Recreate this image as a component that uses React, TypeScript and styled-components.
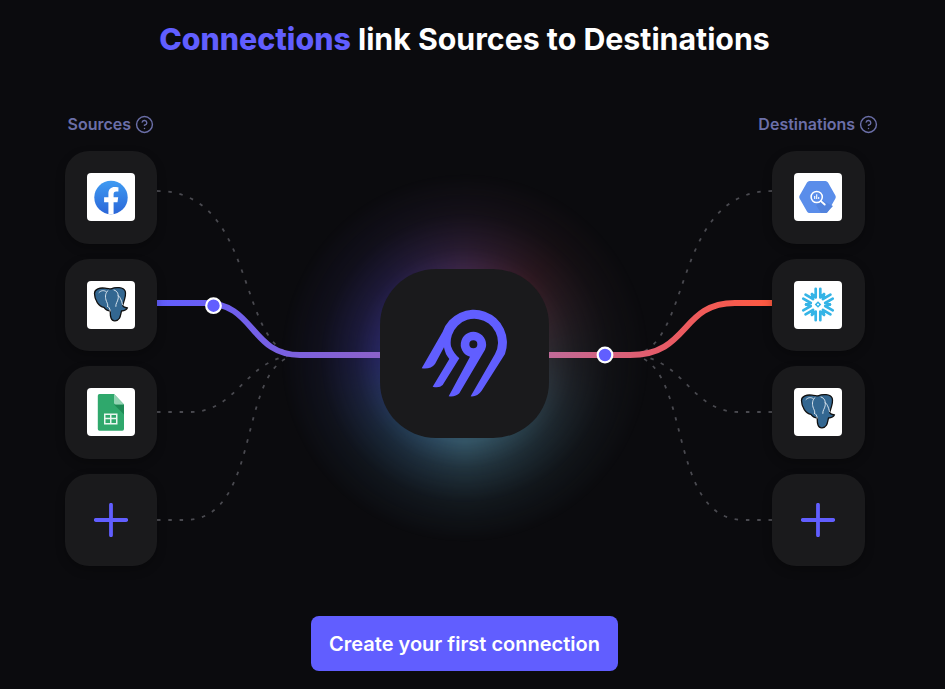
import React from "react";
import styled, { createGlobalStyle } from "styled-components";
import { CircleHelp } from "lucide-react";

const GlobalStyle = createGlobalStyle`
  html, body {
    margin: 0;
    padding: 0;
    background: #0b0b0e;
    font-family: "Inter", "Liberation Sans", sans-serif;
  }
`;

const Facebook = () => (
  <svg width="48" height="48" viewBox="0 0 48 48">
    <defs>
      <linearGradient id="fb" x1="0" y1="0" x2="0" y2="1">
        <stop offset="0" stopColor="#3f9bf2" />
        <stop offset="1" stopColor="#2a66d8" />
      </linearGradient>
    </defs>
    <circle cx="24" cy="24.5" r="16.7" fill="url(#fb)" />
    <path
      d="M21.4 41v-11.8h-4.3v-4.9h4.3v-3.7c0-4.3 2.5-6.6 6.4-6.6 1.9 0 3.6.3 3.6.3v4.1h-2.1c-2.1 0-2.7 1.3-2.7 2.6v3.3h4.6l-.7 4.9h-3.9V41z"
      fill="#fff"
    />
  </svg>
);

const Postgres = () => (
  <svg width="48" height="48" viewBox="0 0 48 48">
    <path
      d="M7.500 12.500C7.500 8 13 6.400 18 7.200c2.200.4 4.300 1 6 .6 4.400-1.800 12.500-2 14.200 2.400 1.300 3.800-1 9.200-2.400 13.600-.4 1.800 1.700 2.800 4.700 3-.9 1.900-3.800 3-6 3.200-1.100 3.800-.8 9.300-6.500 9.800-4 .3-4.800-3.600-4.800-9.900-3.100-.1-4.800-1.300-6.200-3.500C11.800 25.600 7.500 19 7.500 12.500Z"
      fill="#336791"
      stroke="#111"
      strokeWidth="1.300"
      strokeLinejoin="round"
    />
    <path
      d="M21 9.500c-2.600 2-3 6-2 9.500.6 2.300 2.300 4 1.700 6.500M27 9c3.800 1 4.800 4.700 4.100 8.900-.5 2.800-2.500 4.500-2.300 7.500M12 11.500c2.400-2.400 5-2.300 7-1M31 14.500c2 1 3.400 4.500 4.500 9M23.200 30c-.3-3-1.400-4-2.500-4.500"
      fill="none"
      stroke="#e6eef5"
      strokeWidth="0.900"
      strokeLinecap="round"
    />
  </svg>
);

const Sheets = () => (
  <svg width="48" height="48" viewBox="0 0 48 48">
    <path
      d="M12.500 6h14.500l10 10.500v24.500a1.700 1.700 0 0 1-1.700 1.700H12.500a1.700 1.700 0 0 1-1.700-1.700V7.700A1.700 1.700 0 0 1 12.500 6Z"
      fill="#2fa86c"
    />
    <path d="M27 16.500 37 26.500V16.500H27Z" fill="#1e8a55" />
    <path d="M27 6l10 10.500h-8.300A1.700 1.700 0 0 1 27 14.800Z" fill="#93d3b3" />
    <path
      d="M17 25.500h13.500v11H17ZM18.500 27v2.800h4.500V27ZM24.500 27v2.800h4.500V27ZM18.500 31.300v3.700h4.500v-3.700ZM24.500 31.300v3.700h4.500v-3.700Z"
      fill="#e9f6ef"
      fillRule="evenodd"
    />
  </svg>
);

const BigQuery = () => (
  <svg width="48" height="48" viewBox="0 0 48 48">
    <path
      d="M5.600 22.500 13 9.500A3 3 0 0 1 15.600 8h15.800a3 3 0 0 1 2.600 1.500l7.400 13a3 3 0 0 1 0 3L34 38.500a3 3 0 0 1-2.600 1.500H15.600a3 3 0 0 1-2.600-1.500l-7.400-13a3 3 0 0 1 0-3Z"
      fill="#5a8dea"
    />
    <path d="M28 27.500 39 33l-5 5.500a3 3 0 0 1-2.600 1.500H27l-5-8Z" fill="#5283dd" />
    <circle cx="22.700" cy="24" r="5.600" fill="none" stroke="#fff" strokeWidth="1.500" />
    <path d="M26.900 28.100 30.700 31.500" stroke="#fff" strokeWidth="1.900" strokeLinecap="round" />
    <path d="M20.700 23v3M22.700 21.300v4.700M24.700 24v2" stroke="#fff" strokeWidth="1.100" />
  </svg>
);

const Snowflake = () => (
  <svg width="48" height="48" viewBox="0 0 48 48">
    {[0, 60, 120, 180, 240, 300].map((deg) => (
      <g key={deg} transform={`rotate(${deg} 24 23.500)`}>
        <path
          d="M21.700 7.800v8.700l-3.700-3.300M26.300 7.800v8.700l3.700-3.300"
          fill="none"
          stroke="#35b4e6"
          strokeWidth="2.700"
          strokeLinecap="round"
          strokeLinejoin="round"
        />
      </g>
    ))}
    <path d="M24 18.500 29 23.500 24 28.500 19 23.500Z" fill="#fff" />
    <path
      d="M24 20.200 27.300 23.500 24 26.800 20.700 23.500ZM24 22.300 22.800 23.500 24 24.700 25.200 23.500Z"
      fill="#35b4e6"
      fillRule="evenodd"
    />
  </svg>
);

const AddIcon = () => (
  <svg width="34" height="34" viewBox="0 0 34 34">
    <path
      d="M1.800 17h30.400M17 1.800v30.400"
      stroke="#615eff"
      strokeWidth="3.800"
      strokeLinecap="round"
    />
  </svg>
);

const AirbyteLogo = () => (
  <svg width="100" height="100" viewBox="135 135 300 300">
    <path
      d="M155 328 218 218A98 98 0 0 1 405 285L335 395Q322 414 302 412L375 285A71 71 0 1 0 243 262Q250 282 268 298L218 378Q208 388 188 383L238 300Q225 285 222 265L195 315Q182 332 155 328Z"
      fill="#615eff"
    />
    <path
      d="M300 293A38 38 0 1 1 345 272L268 403Q258 414 236 412ZM298 256A12 12 0 1 0 322 256A12 12 0 1 0 298 256Z"
      fill="#615eff"
      fillRule="evenodd"
    />
  </svg>
);

type ConnectorSide = {
  label: string;
  items: React.ReactNode[];
};

const sources: ConnectorSide = {
  label: "Sources",
  items: [<Facebook />, <Postgres />, <Sheets />],
};

const destinations: ConnectorSide = {
  label: "Destinations",
  items: [<BigQuery />, <Snowflake />, <Postgres />],
};

const Column = ({ label, items }: ConnectorSide) => (
  <Side>
    <Label>
      {label}
      <CircleHelp size={19} strokeWidth={1.8} />
    </Label>
    <TileList>
      {items.map((icon, i) => (
        <Tile key={i}>
          <LogoCard>{icon}</LogoCard>
        </Tile>
      ))}
      <Tile>
        <AddIcon />
      </Tile>
    </TileList>
  </Side>
);

const Wires = () => (
  <WireLayer viewBox="0 0 945 689">
    <defs>
      <linearGradient id="leftWire" gradientUnits="userSpaceOnUse" x1="157" y1="0" x2="380" y2="0">
        <stop offset="0" stopColor="#615eff" />
        <stop offset="1" stopColor="#8c62c9" />
      </linearGradient>
      <linearGradient id="rightWire" gradientUnits="userSpaceOnUse" x1="549" y1="0" x2="772" y2="0">
        <stop offset="0" stopColor="#c06a98" />
        <stop offset="0.5" stopColor="#e65b68" />
        <stop offset="1" stopColor="#ff5a40" />
      </linearGradient>
    </defs>
    <g fill="none" stroke="#4a4a50" strokeWidth="1.800" strokeDasharray="3.500 7.800">
      <path d="M157 191C260 191 235 355 300 355" />
      <path d="M157 412H190C240 412 245 355 300 355" />
      <path d="M157 520H185C265 520 235 357 300 355" />
      <path d="M772 191C669 191 694 355 629 355" />
      <path d="M772 412H739C689 412 684 355 629 355" />
      <path d="M772 520H744C664 520 694 357 629 355" />
    </g>
    <path d="M157 303H205C255 303 250 355 300 355H380" fill="none" stroke="url(#leftWire)" strokeWidth="6" />
    <path d="M549 355H630C690 355 680 303 735 303H772" fill="none" stroke="url(#rightWire)" strokeWidth="6" />
    <circle cx="213.500" cy="305.700" r="7.300" fill="#615eff" stroke="#fff" strokeWidth="2.200" />
    <circle cx="605" cy="355" r="7.300" fill="#615eff" stroke="#fff" strokeWidth="2.200" />
  </WireLayer>
);

export default function App() {
  return (
    <>
      <GlobalStyle />
      <Page>
        <Glow />
        <Wires />
        <Title>
          <Accent>Connections</Accent> link Sources to Destinations
        </Title>
        <Diagram>
          <Column {...sources} />
          <HubSlot>
            <Hub>
              <AirbyteLogo />
            </Hub>
          </HubSlot>
          <Column {...destinations} />
        </Diagram>
        <CreateButton>Create your first connection</CreateButton>
      </Page>
    </>
  );
}

const Page = styled.div`
  position: relative;
  box-sizing: border-box;
  width: 929px;
  height: 689px;
  padding-top: 21px;
  display: flex;
  flex-direction: column;
  align-items: center;
`;

const Glow = styled.div`
  position: absolute;
  left: 265px;
  top: 158px;
  width: 400px;
  height: 400px;
  border-radius: 50%;
  background: conic-gradient(
    from 0deg,
    #40284a 0deg,
    #40202a 40deg,
    #2a2a30 90deg,
    #2c4450 140deg,
    #345566 180deg,
    #26405c 225deg,
    #262660 270deg,
    #2c2458 315deg,
    #40284a 360deg
  );
  -webkit-mask-image: radial-gradient(circle closest-side, #000 42%, rgba(0, 0, 0, 0.55) 55%, rgba(0, 0, 0, 0.18) 72%, transparent 92%);
  mask-image: radial-gradient(circle closest-side, #000 42%, rgba(0, 0, 0, 0.55) 55%, rgba(0, 0, 0, 0.18) 72%, transparent 92%);
  filter: blur(6px);
`;

const WireLayer = styled.svg`
  position: absolute;
  left: 0;
  top: 0;
  width: 945px;
  height: 689px;
`;

const Title = styled.h1`
  position: relative;
  margin: 0;
  font-size: 30.300px;
  line-height: 36px;
  font-weight: 700;
  color: #fff;
`;

const Accent = styled.span`
  color: #615eff;
  font-weight: 800;
`;

const Diagram = styled.div`
  box-sizing: border-box;
  width: 800px;
  margin-top: 56px;
  display: grid;
  grid-template-columns: 92.500px 1fr 92.500px;
`;

const Side = styled.div`
  position: relative;
  display: flex;
  flex-direction: column;
  align-items: center;
`;

const Label = styled.div`
  display: flex;
  align-items: center;
  gap: 4px;
  height: 22px;
  margin-bottom: 16px;
  white-space: nowrap;
  font-size: 16px;
  font-weight: 600;
  color: #6b6fa8;
`;

const TileList = styled.div`
  display: flex;
  flex-direction: column;
  gap: 15px;
`;

const Tile = styled.div`
  width: 92.500px;
  height: 92.500px;
  border-radius: 24px;
  background: #1a1a1c;
  box-shadow: 0 4px 10px rgba(0, 0, 0, 0.25);
  display: flex;
  align-items: center;
  justify-content: center;
`;

const LogoCard = styled.div`
  width: 48px;
  height: 48px;
  border-radius: 4px;
  background: #fff;
  overflow: hidden;
`;

const HubSlot = styled.div`
  position: relative;
  padding-top: 28px;
  display: flex;
  align-items: center;
  justify-content: center;
`;

const Hub = styled.div`
  width: 169px;
  height: 169px;
  border-radius: 56px;
  background: #1a1a1c;
  display: flex;
  align-items: center;
  justify-content: center;
`;

const CreateButton = styled.button`
  position: relative;
  margin-top: 50px;
  width: 307px;
  height: 55px;
  border: none;
  border-radius: 8px;
  background: #615eff;
  color: #fff;
  font-family: inherit;
  font-size: 20px;
  font-weight: 600;
`;
